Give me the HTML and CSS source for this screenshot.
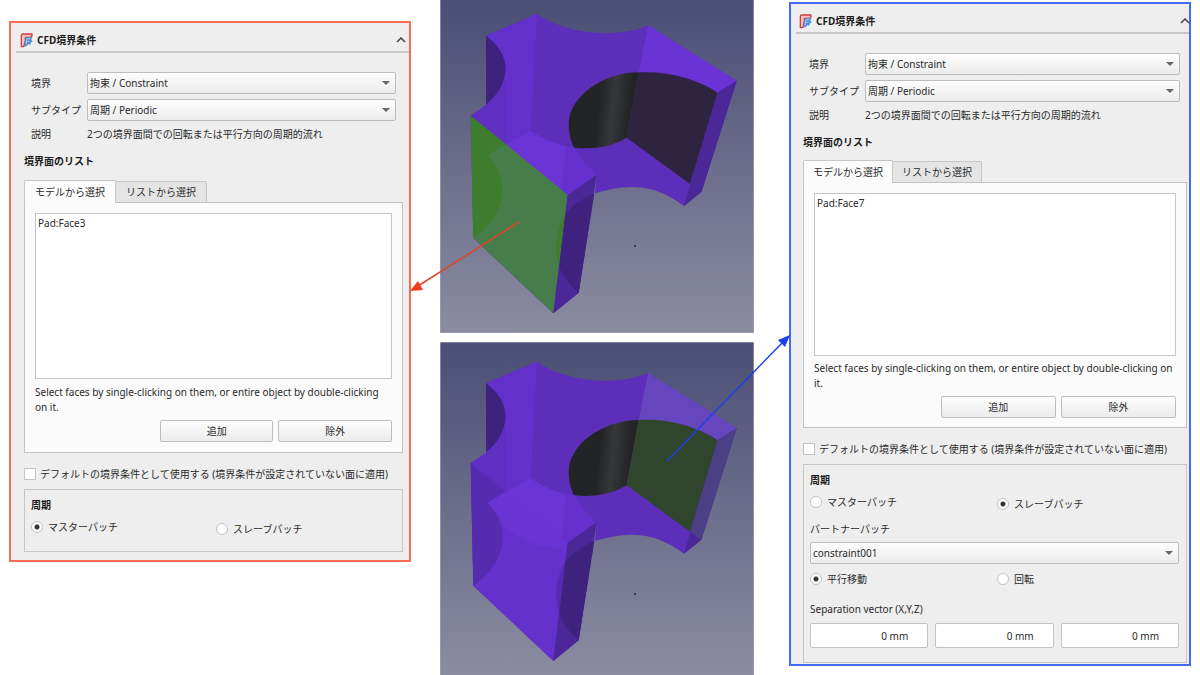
FILE: index.html
```html
<!DOCTYPE html>
<html lang="ja">
<head>
<meta charset="utf-8">
<title>CFD境界条件</title>
<link rel="stylesheet" href="styles.css">
</head>
<body>
<svg class="defs" aria-hidden="true">
  <defs>
    <linearGradient id="sky" x1="0" y1="0" x2="0" y2="1">
      <stop offset="0" stop-color="#4b4e75"/><stop offset="1" stop-color="#8b8ca1"/>
    </linearGradient>
    <linearGradient id="bore" x1="386" y1="330" x2="596" y2="350" gradientUnits="userSpaceOnUse">
      <stop offset="0" stop-color="#222526"/><stop offset=".42" stop-color="#212324"/>
      <stop offset=".62" stop-color="#363739"/><stop offset=".85" stop-color="#232526"/><stop offset="1" stop-color="#202122"/>
    </linearGradient>
    <symbol id="freecad" viewBox="0 0 39 45">
      <path d="M4 8Q4 3 9 3H36V9L31 13H16V22L13 36L10 41H4Z" fill="#f0c4c6" stroke="#d03c42" stroke-width="4" stroke-linejoin="round"/>
      <path d="M16 13H37L34 20L38 25L31 30L32 35L25 34L20 39L12 42L15 32L13 25L18 22Z" fill="#4a90dd"/>
      <path d="M21 17H31M21 25H28M20.500 17L18 35" fill="none" stroke="#a9cdf2" stroke-width="3"/>
    </symbol>
    <symbol id="part" viewBox="0 0 942 999">
      <path fill="#5d2eb9" d="M138 107L291 42C345 78 415 99 500 99Q570 99 624 76L890 242L784 576L732 618C640 548 555 552 465 580L470 524L416 878L340 940L100 714L92 347L138 318Z"/>
      <path fill="#6430cb" d="M138 107L291 42L272 392L138 465Z"/>
      <path fill="#3f227e" d="M138 107Q197 150 197 210Q192 270 138 314Z"/>
      <path fill="#5a2db5" d="M92 347L138 316V384Z"/>
      <path class="wing-top" d="M624 76L890 242L833 278C770 235 680 213 596 217Z"/>
      <path fill="url(#bore)" d="M596 217C490 217 386 290 386 372Q386 412 402 443Q500 452 560 413Z"/>
      <path class="wing-face" d="M596 217C680 213 770 235 833 278L750 552L560 413Z"/>
      <path fill="#4b2798" d="M833 278L890 242L784 576L732 618Z"/>
      <path class="wing-side" d="M833 278L890 242L784 576L750 552Z"/>
      <path fill="#6b34d7" d="M92 347L197 432L272 392Q330 434 402 443Q425 487 470 524L383 585Z"/>
      <path fill="#602fc2" d="M92 347L138 316Q180 285 195 235L197 432Z"/>
      <path fill="#632fca" d="M378 440L402 443Q425 487 470 524L383 585L365 570Z" opacity=".6"/>
      <path class="front" d="M92 347L383 585L340 940L100 714Z"/>
      <path class="front-shade" d="M92 347L197 432L143 465C208 530 208 640 100 714Z"/>
      <path class="front-shade" d="M376 640Q332 720 358 800Z"/>
      <path class="front-top" d="M143 465L197 432L383 585L374 630L365 600Q280 605 195 540Q175 495 143 465Z"/>
      <path fill="#4b2798" d="M383 585L470 524L416 878L340 940Z"/>
      <path fill="#3f227e" d="M463 580Q405 605 376 643L358 803Q380 850 416 878Z"/>
      <path fill="#26242c" d="M583 736h5v5h-5z"/>
    </symbol>
  </defs>
</svg>

<main class="stage">
  <section class="panel panel--master" aria-label="マスターパッチ">
    <header class="panel__head">
      <svg class="logo" aria-hidden="true"><use href="#freecad"/></svg>
      <h1 class="panel__title">CFD境界条件</h1>
      <button class="fold" type="button" aria-label="折りたたむ"><svg viewBox="0 0 10 6"><path d="M1 5L5 1L9 5"/></svg></button>
    </header>
    <div class="form">
      <label for="a-boundary">境界</label>
      <span class="combo"><select id="a-boundary"><option>拘束 / Constraint</option></select></span>
      <label for="a-subtype">サブタイプ</label>
      <span class="combo"><select id="a-subtype"><option>周期 / Periodic</option></select></span>
      <span>説明</span>
      <span>2つの境界面間での回転または平行方向の周期的流れ</span>
    </div>
    <div class="body">
      <h2 class="heading">境界面のリスト</h2>
      <div class="tabs" role="tablist">
        <button class="tab tab--on" type="button" role="tab" aria-selected="true">モデルから選択</button>
        <button class="tab" type="button" role="tab" aria-selected="false">リストから選択</button>
      </div>
      <div class="pane">
        <ul class="faces"><li>Pad:Face3</li></ul>
        <p class="hint">Select faces by single-clicking on them, or entire object by double-clicking on it.</p>
        <div class="actions"><button class="btn" type="button">追加</button><button class="btn" type="button">除外</button></div>
      </div>
      <label class="check"><input type="checkbox">デフォルトの境界条件として使用する (境界条件が設定されていない面に適用)</label>
      <div class="group" role="group" aria-label="周期">
        <h3 class="heading">周期</h3>
        <div class="radios radios--step">
          <label class="radio"><input type="radio" name="a-role" checked>マスターパッチ</label>
          <label class="radio"><input type="radio" name="a-role">スレーブパッチ</label>
        </div>
      </div>
    </div>
  </section>

  <div class="views">
    <svg class="view view--master" viewBox="0 0 942 999" role="img" aria-label="Pad:Face3">
      <rect width="942" height="999" fill="url(#sky)"/>
      <use href="#part" width="942" height="999"/>
      <rect class="frame" x="1" y="-4" width="940" height="1002"/>
    </svg>
    <svg class="view view--slave" viewBox="0 0 942 999" role="img" aria-label="Pad:Face7">
      <rect width="942" height="999" fill="url(#sky)"/>
      <use href="#part" y="17" width="942" height="999"/>
      <rect class="frame" x="1" y="1" width="940" height="1005"/>
    </svg>
  </div>

  <section class="panel panel--slave" aria-label="スレーブパッチ">
    <header class="panel__head">
      <svg class="logo" aria-hidden="true"><use href="#freecad"/></svg>
      <h1 class="panel__title">CFD境界条件</h1>
      <button class="fold" type="button" aria-label="折りたたむ"><svg viewBox="0 0 10 6"><path d="M1 5L5 1L9 5"/></svg></button>
    </header>
    <div class="form">
      <label for="b-boundary">境界</label>
      <span class="combo"><select id="b-boundary"><option>拘束 / Constraint</option></select></span>
      <label for="b-subtype">サブタイプ</label>
      <span class="combo"><select id="b-subtype"><option>周期 / Periodic</option></select></span>
      <span>説明</span>
      <span>2つの境界面間での回転または平行方向の周期的流れ</span>
    </div>
    <div class="body">
      <h2 class="heading">境界面のリスト</h2>
      <div class="tabs" role="tablist">
        <button class="tab tab--on" type="button" role="tab" aria-selected="true">モデルから選択</button>
        <button class="tab" type="button" role="tab" aria-selected="false">リストから選択</button>
      </div>
      <div class="pane">
        <ul class="faces"><li>Pad:Face7</li></ul>
        <p class="hint">Select faces by single-clicking on them, or entire object by double-clicking on it.</p>
        <div class="actions"><button class="btn" type="button">追加</button><button class="btn" type="button">除外</button></div>
      </div>
      <label class="check"><input type="checkbox">デフォルトの境界条件として使用する (境界条件が設定されていない面に適用)</label>
      <div class="group" role="group" aria-label="周期">
        <h3 class="heading">周期</h3>
        <div class="radios radios--step">
          <label class="radio"><input type="radio" name="b-role">マスターパッチ</label>
          <label class="radio"><input type="radio" name="b-role" checked>スレーブパッチ</label>
        </div>
        <label class="partner" for="b-partner">パートナーパッチ</label>
        <span class="combo"><select id="b-partner"><option>constraint001</option></select></span>
        <div class="radios">
          <label class="radio"><input type="radio" name="b-move" checked>平行移動</label>
          <label class="radio"><input type="radio" name="b-move">回転</label>
        </div>
        <p class="vector-label" id="sep">Separation vector (X,Y,Z)</p>
        <div class="vector" role="group" aria-labelledby="sep">
          <input type="text" value="0 mm" aria-label="X">
          <input type="text" value="0 mm" aria-label="Y">
          <input type="text" value="0 mm" aria-label="Z">
        </div>
      </div>
    </div>
  </section>

  <svg class="arrows" viewBox="0 0 1200 675" aria-hidden="true">
    <path d="M519 222L418 286" stroke="#e0452a"/>
    <path d="M410 291L418 281L423 290Z" fill="#f03a1c"/>
    <path d="M667 461L783 342" stroke="#1c40e8"/>
    <path d="M790 335L778 340L785 347Z" fill="#1c40f0"/>
  </svg>
</main>
</body>
</html>
```
FILE: styles.css
```css
* { box-sizing: border-box; }

body {
  margin: 0;
  background: #fff;
  color: #2a2a2a;
  font: 10px/16px "Noto Sans", "Noto Sans CJK JP", sans-serif;
}

h1, h2, h3, p, ul { margin: 0; padding: 0; font-size: inherit; }
ul { list-style: none; }
button, input, select { font: inherit; color: inherit; margin: 0; }
.defs { position: absolute; width: 0; height: 0; }

.stage {
  position: relative;
  display: grid;
  grid-template-columns: minmax(0, 402fr) minmax(0, 378fr) minmax(0, 402fr);
  align-items: start;
  padding: 0 9px;
  overflow: hidden;
}

/* panels */
.panel { background: #eee; border: 2px solid; }
.panel--master {
  --indent: 13px;
  --label: 20px;
  --end: 6px;
  --list: 166px;
  --tab: 10px;
  --gap: 6px;
  margin-top: 21px;
  padding-bottom: 8px;
  border-color: #fb6a52;
}
.panel--slave {
  --indent: 12px;
  --label: 18px;
  --end: 2px;
  --list: 163px;
  --tab: 9px;
  --gap: 5px;
  margin-top: 2px;
  padding-bottom: 1px;
  border-color: #4468f8;
}

.panel__head {
  display: flex;
  align-items: center;
  height: 30px;
  margin-left: 5px;
  padding: 6px 3px 0 4px;
  border-bottom: 2px solid #c6c6c6;
}
.logo { width: 13px; height: 15px; margin-right: 4px; }
.panel__title { flex: 1; font-weight: 700; color: #1c1c1c; }
.fold { padding: 0; border: 0; background: none; display: flex; }
.fold svg { width: 10px; height: 6px; fill: none; stroke: #444; stroke-width: 1.5; }
.panel--slave .fold { margin-right: -4px; }
.panel--slave .panel__head { padding-left: 3px; overflow: hidden; }

.form {
  display: grid;
  grid-template-columns: 56px 1fr;
  row-gap: 5px;
  align-items: center;
  padding: 19px calc(var(--end) + 7px) 0 var(--label);
}
.form label, .form span { white-space: nowrap; }

.combo { position: relative; display: block; }
.combo select {
  appearance: none;
  display: block;
  width: 100%;
  height: 22px;
  padding: 0 20px 0 2px;
  border: 1px solid #bdbdbd;
  border-radius: 2px;
  background: linear-gradient(#fdfdfd, #ececec);
}
.combo::after {
  content: "";
  position: absolute;
  right: 6px;
  top: 9px;
  border: 4px solid transparent;
  border-top-color: #666;
  border-bottom: 0;
}

.body { padding: 11px var(--end) 0 var(--indent); }
.heading { font-weight: 700; color: #1c1c1c; }

.tabs { display: flex; align-items: flex-end; margin-top: calc(var(--gap) + 5px); }
.tab {
  height: 21px;
  padding: 0 var(--tab);
  border: 1px solid #c6c6c6;
  border-bottom: 0;
  border-left: 0;
  border-radius: 0 2px 0 0;
  background: #e4e4e4;
}
.tab--on {
  position: relative;
  height: 23px;
  margin-bottom: -1px;
  border-left: 1px solid #c6c6c6;
  border-radius: 2px 2px 0 0;
  background: #fbfbfb;
}

.pane { padding: 10px 10px calc(var(--gap) + 4px); border: 1px solid #c2c2c2; background: #fbfbfb; }
.faces { min-height: var(--list); padding: 1px 2px; border: 1px solid #c6c6c6; background: #fff; }
.hint { margin-top: var(--gap); line-height: 15px; }
.actions { display: grid; grid-template-columns: 1fr 1fr; gap: 5px; width: 65%; margin: 5px 0 0 auto; }
.btn {
  height: 22px;
  padding: 0;
  border: 1px solid #bdbdbd;
  border-radius: 2px;
  background: linear-gradient(#fdfdfd, #ececec);
}

.check, .radio { display: flex; align-items: center; white-space: nowrap; }
.check { gap: 4px; margin-top: 13px; }
.radio { gap: 5px; }
.check input, .radio input {
  appearance: none;
  flex: none;
  width: 12px;
  height: 12px;
  border: 1px solid #c2c2c2;
  background: #fff;
}
.radio input { border-radius: 50%; }
.radio input:checked { background: radial-gradient(circle, #333 0 2px, #fff 3px); }

.group { margin-top: 7px; padding: 7px 6px 14px; border: 1px solid #c6c6c6; }
.panel--slave .group { padding-right: 7px; }
.radios { display: grid; grid-template-columns: 1fr 1fr; column-gap: 5px; margin-top: 6px; }
.radios--step { min-height: 18px; align-items: start; }
.radios--step .radio:last-child { align-self: end; }
.partner { display: block; margin: 9px 0 5px; }
.combo + .radios { margin-top: 7px; }
.vector-label { margin-top: 14px; }
.vector { display: grid; grid-template-columns: repeat(3, 1fr); gap: 7px; margin-top: 6px; }
.vector input {
  width: 100%;
  min-width: 0;
  height: 25px;
  padding: 0 19px 0 4px;
  border: 1px solid #c2c2c2;
  border-radius: 2px;
  background: #fff;
  text-align: right;
}

/* 3D views */
.views { display: grid; gap: 9px; padding: 0 35px 0 29px; }
.view { display: block; width: 100%; height: auto; }
.frame { fill: none; stroke: #a3a4b6; stroke-width: 2; }
.view--master { --wing-top: #6a33d6; --wing-face: #2f2440; --wing-side: #4b2798; --front: #477c4b; --front-shade: #3f7d2e; --front-top: #477c4b; }
.view--slave { --wing-top: #6546bf; --wing-face: #30462c; --wing-side: #4b3f85; --front: #6531cd; --front-shade: #562bb0; --front-top: #6a33d4; }
.wing-top { fill: var(--wing-top); }
.wing-face { fill: var(--wing-face); }
.wing-side { fill: var(--wing-side); }
.front { fill: var(--front); }
.front-shade { fill: var(--front-shade); }
.front-top { fill: var(--front-top); }

.arrows { position: absolute; inset: 0; width: 100%; height: auto; pointer-events: none; fill: none; stroke-width: 1.5; }
```
